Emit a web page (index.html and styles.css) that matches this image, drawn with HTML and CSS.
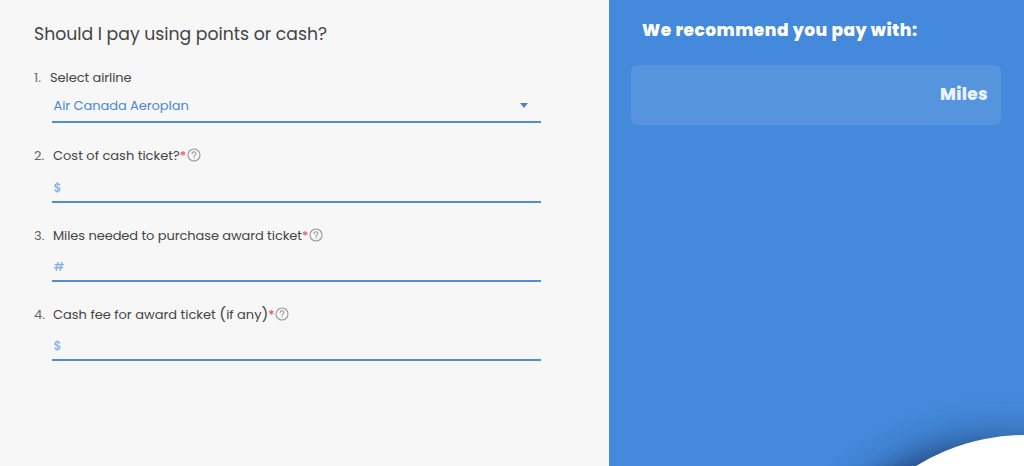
FILE: index.html
```html
<!DOCTYPE html>
<html lang="en">
<head>
    <meta charset="UTF-8">
    <meta name="viewport" content="width=device-width, initial-scale=1.0">
    <title>Points or cash calculator</title>
    <link rel="stylesheet" href="styles.css">
</head>
<body>
    <svg class="sprite" aria-hidden="true">
        <symbol id="help" viewBox="0 0 14 14">
            <circle cx="7" cy="7" r="6" />
            <path d="M5.1 5.6C5.1 4.4 5.9 3.8 7 3.8s1.9.7 1.9 1.7c0 1.4-1.8 1.4-1.8 2.9M7.1 10v.3" />
        </symbol>
    </svg>

    <main class="calculator">
        <section class="questions">
            <h1 class="title">Should I pay using points or cash?</h1>

            <div class="question question-airline">
                <div class="label"><span class="number">1.</span><span class="text">Select airline</span></div>
                <div class="field select">
                    <span class="airline">Air Canada Aeroplan</span>
                    <span class="arrow"></span>
                </div>
            </div>

            <div class="question question-cost">
                <div class="label"><span class="number">2.</span><span class="text">Cost of cash ticket?</span><span class="required">*</span><svg class="help"><use href="#help" /></svg></div>
                <div class="field">$</div>
            </div>

            <div class="question question-miles">
                <div class="label"><span class="number">3.</span><span class="text">Miles needed to purchase award ticket</span><span class="required">*</span><svg class="help"><use href="#help" /></svg></div>
                <div class="field">#</div>
            </div>

            <div class="question question-fee">
                <div class="label"><span class="number">4.</span><span class="text">Cash fee for award ticket <span class="paren">(</span>if any<span class="paren">)</span></span><span class="required">*</span><svg class="help"><use href="#help" /></svg></div>
                <div class="field">$</div>
            </div>
        </section>

        <aside class="result">
            <h2 class="result-title">We recommend you pay with:</h2>
            <div class="result-box"><span class="unit">Miles</span></div>
            <div class="bubble"></div>
        </aside>
    </main>
</body>
</html>
```

FILE: styles.css
```css
* {
    box-sizing: border-box;
}

body {
    margin: 0;
    font-family: Poppins, Inter, sans-serif;
    color: #444;
    overflow: hidden;
}

.sprite {
    display: none;
}

.calculator {
    display: flex;
    height: 466px;
}

.questions {
    width: 609px;
    padding: 20px 68px 0 34px;
    background: #f7f7f7;
}

.title {
    margin: 0 0 19px;
    font-size: 17.25px;
    font-weight: 400;
    line-height: 28px;
    white-space: nowrap;
}

.question {
    margin-bottom: 22px;
}

.label {
    display: flex;
    align-items: center;
    height: 20px;
    padding-top: 1px;
    font-size: 13px;
    white-space: nowrap;
}

.number {
    width: 19px;
    color: #666;
}

.question-airline .number {
    width: 16px;
}

.question-airline .text,
.question-miles .text {
    letter-spacing: -0.08px;
}

.paren {
    font-size: 15px;
    line-height: 1;
}

.required {
    width: 6px;
    color: #f04444;
}

.help {
    width: 14px;
    height: 14px;
    margin: 0 0 1px 1px;
    fill: none;
    stroke: #999;
    stroke-width: 1.1;
    stroke-linecap: round;
}

.field {
    display: flex;
    align-items: center;
    height: 37px;
    margin-left: 17.5px;
    padding: 9px 13px 0 2px;
    border-bottom: 2px solid #528dd3;
    font-size: 12.5px;
    font-weight: 500;
    color: #83afe8;
}

.question-airline .field {
    height: 36px;
    padding-top: 3px;
}

.question-cost .field {
    height: 38px;
}

.select {
    justify-content: space-between;
    color: #4787d8;
}

.airline {
    font-size: 13px;
    font-weight: 400;
    letter-spacing: -0.06px;
}

.arrow {
    border: 4.5px solid transparent;
    border-top: 5px solid #4c82cb;
    border-bottom: 0;
}

.result {
    position: relative;
    flex: 1;
    padding: 16px 23px 0 22px;
    background: #4489db;
    overflow: hidden;
}

.result-title {
    margin: 0 0 21px 11px;
    font-size: 17px;
    font-weight: 800;
    line-height: 28px;
    letter-spacing: 0.48px;
    color: #fff;
    white-space: nowrap;
}

.result-box {
    display: flex;
    align-items: center;
    justify-content: flex-end;
    height: 60px;
    padding: 0 13px 3px;
    border-radius: 6px;
    background: #5694de;
}

.unit {
    font-size: 17px;
    font-weight: 800;
    letter-spacing: 0.3px;
    color: #eaf3ff;
}

/* round button peeking in from the bottom corner */
.bubble {
    position: absolute;
    top: 435px;
    left: 209px;
    width: 414px;
    height: 414px;
    border-radius: 50%;
    background: #fff;
    box-shadow: -38px 10px 36px -8px rgba(20, 40, 75, 0.75), -20px 0 40px -4px rgba(20, 40, 75, 0.35);
}
```
